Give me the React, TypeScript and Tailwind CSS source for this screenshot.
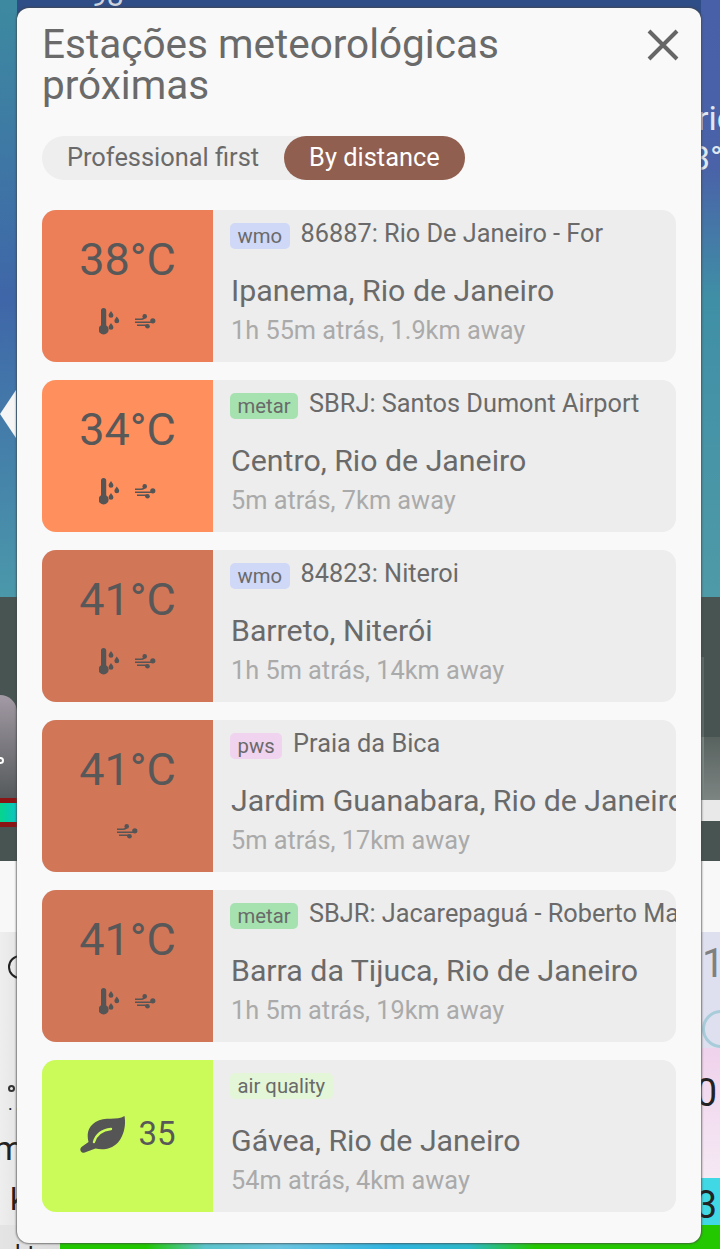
import React from "react";

const Thermo = () => (
  <svg width="21" height="27" viewBox="0 0 21 27" fill="#555">
    <path d="M2 2.600a2.600 2.600 0 0 1 5.200 0v14.700a5 5 0 1 1-5.200 0z" />
    <path d="M12 3c1.500 2.100 2.400 3.300 2.400 4.400a2.400 2.400 0 0 1-4.800 0C9.600 6.300 10.500 5.100 12 3z" />
    <path d="M17.800 8.500c1.500 2.100 2.400 3.300 2.400 4.400a2.400 2.400 0 0 1-4.800 0c0-1.100.9-2.300 2.400-4.400z" />
    <path d="M12 15c1.500 2.100 2.400 3.300 2.400 4.400a2.400 2.400 0 0 1-4.800 0c0-1.100.9-2.300 2.400-4.400z" />
  </svg>
);

const Wind = () => (
  <svg width="21" height="15" viewBox="0 0 21 15" fill="none" stroke="#555" strokeWidth="1.600">
    <path d="M0 5.200h6c2.500 0 3.700-1 3.700-3.500M0 8.200h17.300M2 11.200h10.300" />
    <circle cx="9.700" cy="2.400" r="2.300" fill="#555" stroke="none" />
    <circle cx="17.800" cy="6.800" r="2.600" fill="#555" stroke="none" />
    <circle cx="12.500" cy="12.200" r="2.300" fill="#555" stroke="none" />
  </svg>
);

const Leaf = () => (
  <svg width="46" height="38" viewBox="0 0 46 38">
    <path fill="#555" d="M45.500 1c1.600 9-.4 20-7 27-6 6-14.500 7.500-22 5.500l-9.500 3.500c-1.500 1.200-4 1-5-.5s-1-3 .5-4.500l7-5c-2-8-.5-15 7-20C26 1 38 6 45.500 1z" />
    <path fill="none" stroke="#cbfb58" strokeWidth="2.400" strokeLinecap="round" d="M15 27c2-7 8-12 17-13" />
  </svg>
);

type Station = {
  temp: string; color: string; tag: string; tagBg: string; title: string; name: string; sub: string; thermo: boolean;
};

const stations: Station[] = [
  { temp: "38°C", color: "bg-[#ec7f58]", tag: "wmo", tagBg: "bg-[#cfd8f6]", title: "86887: Rio De Janeiro - For", name: "Ipanema, Rio de Janeiro", sub: "1h 55m atrás, 1.9km away", thermo: true },
  { temp: "34°C", color: "bg-[#ff905e]", tag: "metar", tagBg: "bg-[#a5e2b0]", title: "SBRJ: Santos Dumont Airport", name: "Centro, Rio de Janeiro", sub: "5m atrás, 7km away", thermo: true },
  { temp: "41°C", color: "bg-[#d27658]", tag: "wmo", tagBg: "bg-[#cfd8f6]", title: "84823: Niteroi", name: "Barreto, Niterói", sub: "1h 5m atrás, 14km away", thermo: true },
  { temp: "41°C", color: "bg-[#d27658]", tag: "pws", tagBg: "bg-[#f0d3ee]", title: "Praia da Bica", name: "Jardim Guanabara, Rio de Janeiro", sub: "5m atrás, 17km away", thermo: false },
  { temp: "41°C", color: "bg-[#d27658]", tag: "metar", tagBg: "bg-[#a5e2b0]", title: "SBJR: Jacarepaguá - Roberto Marinho", name: "Barra da Tijuca, Rio de Janeiro", sub: "1h 5m atrás, 19km away", thermo: true },
];

function Body({ tag, tagBg, title, name, sub }: { tag: string; tagBg: string; title: string; name: string; sub: string }) {
  return (
    <div className="flex-1 min-w-0 overflow-hidden pl-[17px] pt-[9px] whitespace-nowrap">
      <div className="flex items-start h-[50px]">
        <span className={`${tagBg} text-[20.300px] px-[7.500px] h-[26px] leading-[26px] mt-[4px] rounded-[5px] text-[#6a6a6a]`}>{tag}</span>
        {title && <span className="ml-[11px] text-[25.300px] leading-[30px] text-[#6a6a6a]">{title}</span>}
      </div>
      <div className="pl-[1px] text-[30.300px] leading-[38px] mt-[3px] text-[#6a6a6a]">{name}</div>
      <div className="pl-[1px] text-[25.300px] leading-[32px] mt-[5px] text-[#aaa]">{sub}</div>
    </div>
  );
}

function Card({ s }: { s: Station }) {
  return (
    <div className="flex h-[152px] rounded-[14px] overflow-hidden bg-[#ededed]">
      <div className={`${s.color} w-[171px] shrink-0 flex flex-col items-center pt-[22px]`}>
        <div className="text-[45px] leading-[56px] text-[#585858]">{s.temp}</div>
        <div className="flex items-center justify-center gap-[15px] mt-[19px] h-[28px]">
          {s.thermo && <Thermo />}
          <Wind />
        </div>
      </div>
      <Body tag={s.tag} tagBg={s.tagBg} title={s.title} name={s.name} sub={s.sub} />
    </div>
  );
}

const bottomNumbers = ["12", "7", "7", "8", "9", "15", "16", "16"];

function Backdrop() {
  return (
    <div className="flex flex-col h-[1249px] w-[720px] overflow-hidden">
      {/* map */}
      <div className="relative h-[597px] flex justify-between bg-[#2f4d86] text-[#dfe8f0]">
        <div className="w-[17px] bg-gradient-to-b from-[#3d8aa0] via-[#3f66a8] to-[#4b98aa]" />
        <div className="w-[19px] bg-[linear-gradient(to_bottom,#4760a8_0%,#4a62a8_28%,#3f8fa6_50%,#4f9aa8_100%)]" />
        <div className="absolute left-[90px] top-[-19px] text-[30px] leading-[30px] text-[#cfd4dc]">98</div>
        <div className="absolute left-[697px] top-[98px] text-[34px] leading-[40px]">ric</div>
        <div className="absolute left-[691px] top-[138px] text-[34px] leading-[40px]">3°</div>
        <div className="absolute left-0 top-[390px] w-0 h-0 border-y-[24px] border-y-transparent border-r-[16px] border-r-[#f5f5f5]" />
      </div>

      {/* dark chart band */}
      <div className="h-[264px] flex justify-between bg-[#475452]">
        <div className="w-[17px] flex flex-col">
          <div className="h-[98px]" />
          <div className="h-[103px] rounded-tr-[17px] bg-gradient-to-b from-[#a39aa5] to-[#555a5c] flex flex-col justify-center pt-[28px]">
            <div className="size-[7px] -ml-[3px] rounded-full border-2 border-white" />
          </div>
          <div className="h-[29px] bg-gradient-to-r from-[#08d48c] to-[#10c4c4] border-y-[5px] border-y-[#8b1414]" />
        </div>
        <div className="w-[19px] flex flex-col">
          <div className="h-[60px]" />
          <div className="h-[80px] border-l-[3px] border-l-[#5f6a68]" />
          <div className="h-[63px] border-l-[3px] border-l-[#7c8684] bg-gradient-to-b from-[#58625f] to-[#7d8583]" />
          <div className="h-[21px] bg-[#e9e9e9]" />
        </div>
      </div>

      <div className="h-[71px] bg-[#f8f8f8]" />

      {/* forecast table */}
      <div className="h-[293px] flex justify-between text-[#222]">
        <div className="w-[60px] flex flex-col bg-gradient-to-r from-[#eeeeee] to-[#d2d2d2] overflow-hidden">
          <div className="shrink-0 size-[24px] ml-[8px] mt-[23px] rounded-full border-2 border-[#222]" />
          <div className="shrink-0 size-[7px] ml-[8px] mt-[106px] rounded-full border-2 border-[#333]" />
          <div className="ml-[8px] mt-[5px] text-[18px] leading-[14px] tracking-[3px]">..</div>
          <div className="-ml-[6px] mt-[20px] text-[34px] leading-[34px]">m.</div>
          <div className="ml-[10px] mt-[18px] text-[32px] leading-[32px]">k</div>
        </div>
        <div className="w-[19px] flex flex-col">
          <div className="h-[116px] bg-[#dfe0ef] overflow-hidden pl-[1px] pt-[8px]">
            <div className="text-[#808080] text-[40px] leading-[48px]">1</div>
            <div className="size-[38px] mt-[22px] rounded-full border-[3px] border-[#a8ccd9]" />
          </div>
          <div className="h-[130px] flex justify-end pr-[3px] bg-gradient-to-b from-[#efd2ec] to-[#f5e9f4] text-[38px] leading-[90px]">0</div>
          <div className="h-[47px] flex justify-end pr-[3px] bg-[#3fd8e4] text-[38px] leading-[54px]">3</div>
        </div>
      </div>

      {/* bottom row */}
      <div className="h-[24px] flex text-[#222]">
        <div className="w-[60px] pl-[15px] pt-[15px] bg-gradient-to-r from-[#e4e4e4] to-[#dcdcdc] text-[24px] leading-[28px]">kt</div>
        <div className="flex-1 grid grid-cols-8 text-center text-[24px] leading-[28px] bg-[linear-gradient(to_right,#20c800_0%,#20c800_13%,#5cc4cc_22%,#6cc4e0_33%,#30b4e0_50%,#2cb8c8_62%,#24c800_72%,#24c800_100%)]">
          {bottomNumbers.map((n, i) => <div key={i} className="pt-[21px]">{n}</div>)}
        </div>
      </div>
    </div>
  );
}

export default function App() {
  return (
    <div className="relative w-[720px] h-[1249px] overflow-hidden font-['Roboto',sans-serif]">
      <Backdrop />
      <div className="absolute left-[17px] top-[8px] w-[684px] h-[1235px] bg-[#f9f9f9] rounded-[12px] shadow-[0_0_2px_1px_rgba(70,70,70,0.7)] pl-[25px] pr-[25px] pt-[16px]">
        <div className="flex justify-between">
          <h1 className="text-[40.500px] leading-[41px] text-[#6a6a6a] w-[520px]">Estações meteorológicas próximas</h1>
          <svg className="mt-[4px] mr-[-4px]" width="34" height="34" viewBox="0 0 34 34" stroke="#666" strokeWidth="4" fill="none">
            <path d="M3 3l28 28M31 3L3 31" />
          </svg>
        </div>
        <div className="mt-[30px] flex w-fit h-[44px] rounded-[22px] bg-[#eeeeee] text-[25.400px] leading-[42px]">
          <div className="pl-[25px] pr-[25px] text-[#6a6a6a]">Professional first</div>
          <div className="px-[25px] rounded-[22px] bg-[#905f50] text-white">By distance</div>
        </div>
        <div className="mt-[30px] flex flex-col gap-[18px]">
          {stations.map((s, i) => <Card key={i} s={s} />)}
          <div className="flex h-[152px] rounded-[14px] overflow-hidden bg-[#ededed]">
            <div className="bg-[#cbfb58] w-[171px] shrink-0 flex items-center justify-center gap-[13px] pb-[4px]">
              <Leaf />
              <span className="text-[33px] text-[#585858]">35</span>
            </div>
            <Body tag="air quality" tagBg="bg-[#e4f6d8]" title="" name="Gávea, Rio de Janeiro" sub="54m atrás, 4km away" />
          </div>
        </div>
      </div>
    </div>
  );
}
